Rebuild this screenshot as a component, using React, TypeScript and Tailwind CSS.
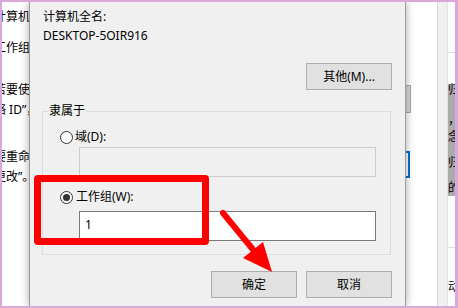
function Radio({ checked }: { checked?: boolean }) {
  return (
    <div className="w-[13px] h-[13px] rounded-full border border-[#333333] bg-white flex items-center justify-center shrink-0">
      {checked && <div className="w-[7px] h-[7px] rounded-full bg-[#333333]" />}
    </div>
  );
}

function Btn({ children }: { children: React.ReactNode }) {
  return (
    <div className="w-[86px] h-[27px] bg-[#e1e1e1] border border-[#adadad] flex items-center justify-center">
      {children}
    </div>
  );
}

export default function App() {
  return (
    <div className="relative w-[458px] h-[308px] overflow-hidden flex border-t-2 border-l-2 border-b-2 border-r-[3px] border-[#dba8dc] bg-white text-[12px] leading-4 text-black font-['Noto_Sans','Noto_Sans_CJK_SC',sans-serif]">
      {/* background window, left */}
      <div className="w-[27px] shrink-0 overflow-hidden bg-white">
        <div className="-ml-[8px] whitespace-nowrap flex flex-col">
          <div className="mt-[5px] h-5 leading-5">计算机</div>
          <div className="mt-[11px] h-5 leading-5">工作组</div>
          <div className="mt-[22px] h-5 leading-5">若要使</div>
          <div className="h-5 leading-5">络 ID”，</div>
          <div className="mt-[27px] h-5 leading-5">要重命</div>
          <div className="h-5 leading-5">更改”。</div>
        </div>
      </div>

      {/* dialog */}
      <div className="w-[377px] shrink-0 relative z-10 bg-[#f0f0f0] border-x border-[#9b9b9b] shadow-[0_0_8px_rgba(0,0,0,0.35)] flex flex-col">
        <div className="mt-[7px] ml-[13px]">计算机全名:</div>
        <div className="mt-[3px] ml-[13px]">DESKTOP-5OIR916</div>
        <div className="self-end mr-[13px] mt-[19px]">
          <Btn>其他(M)...</Btn>
        </div>

        <div className="relative mt-[21px] ml-[12px] mr-[14px] h-[144px] border border-[#dcdcdc] flex flex-col pt-[17px] pl-[17px]">
          <div className="absolute left-[5px] -top-[9px] px-[1px] bg-[#f0f0f0] leading-4">隶属于</div>
          <div className="flex items-center h-4 gap-[2px]">
            <Radio />
            <span>域(D):</span>
          </div>
          <div className="mt-[2px] ml-[19px] w-[297px] h-[30px] border border-[#cccccc] bg-[#f0f0f0]" />
          <div className="mt-[12px] flex items-center h-4 gap-[3px]">
            <Radio checked />
            <span>工作组(W):</span>
          </div>
          <div className="mt-[6px] ml-[19px] w-[297px] h-[30px] border border-[#7a7a7a] bg-white flex items-center px-[5px] pb-[3px]">
            1
          </div>
        </div>

        <div className="mt-[16px] mr-[13px] flex justify-end gap-[9px]">
          <Btn>确定</Btn>
          <Btn>取消</Btn>
        </div>
      </div>

      {/* background window, right */}
      <div className="flex-1 flex">
        <div className="w-[31px] bg-white flex flex-col">
          <div className="mt-[83px] w-[5px] h-[28px] bg-[#d6d6d6] border border-l-0 border-[#a9a9a9]" />
          <div className="mt-[38px] w-[4px] h-[27px] border-2 border-l-0 border-[#0a6fd1]" />
        </div>
        <div className="w-px bg-[#d9d9d9]" />
        <div className="w-[9px] bg-[#f0f0f0]" />
        <div className="w-px bg-[#e3e3e3]" />
        <div className="w-[7px] overflow-hidden flex flex-col bg-white whitespace-nowrap">
          <div className="h-[50px] shrink-0" />
          <div className="h-px bg-[#dddddd] shrink-0" />
          <div className="h-[31px] shrink-0" />
          <div className="h-[112px] shrink-0 bg-[#ababab] flex flex-col leading-[14px]">
            <div className="-mt-[1px] h-[14px]">归</div>
            <div className="mt-[16px] h-[14px]">，</div>
            <div className="mt-[3px] h-[14px]">念</div>
            <div className="mt-[12px] h-[14px]">归</div>
            <div className="mt-[11px] h-[14px]">的</div>
          </div>
          <div className="h-[51px] shrink-0" />
          <div className="h-px bg-[#dddddd] shrink-0" />
          <div className="mt-[32px] h-[14px] leading-[14px] shrink-0">动</div>
        </div>
      </div>

      {/* annotations */}
      <div className="absolute z-20 left-[32px] top-[173px] w-[175px] h-[70px] border-[7px] border-[#ff0000] rounded-[4px] pointer-events-none" />
      <svg
        className="absolute z-20 -left-[2px] -top-[2px] pointer-events-none"
        width="458"
        height="308"
        viewBox="0 0 458 308"
      >
        <line x1="223" y1="213" x2="255" y2="252" stroke="#ff0000" strokeWidth="6" strokeLinecap="round" />
        <polygon points="272,272 243,258 263,242" fill="#ff0000" />
      </svg>
    </div>
  );
}
